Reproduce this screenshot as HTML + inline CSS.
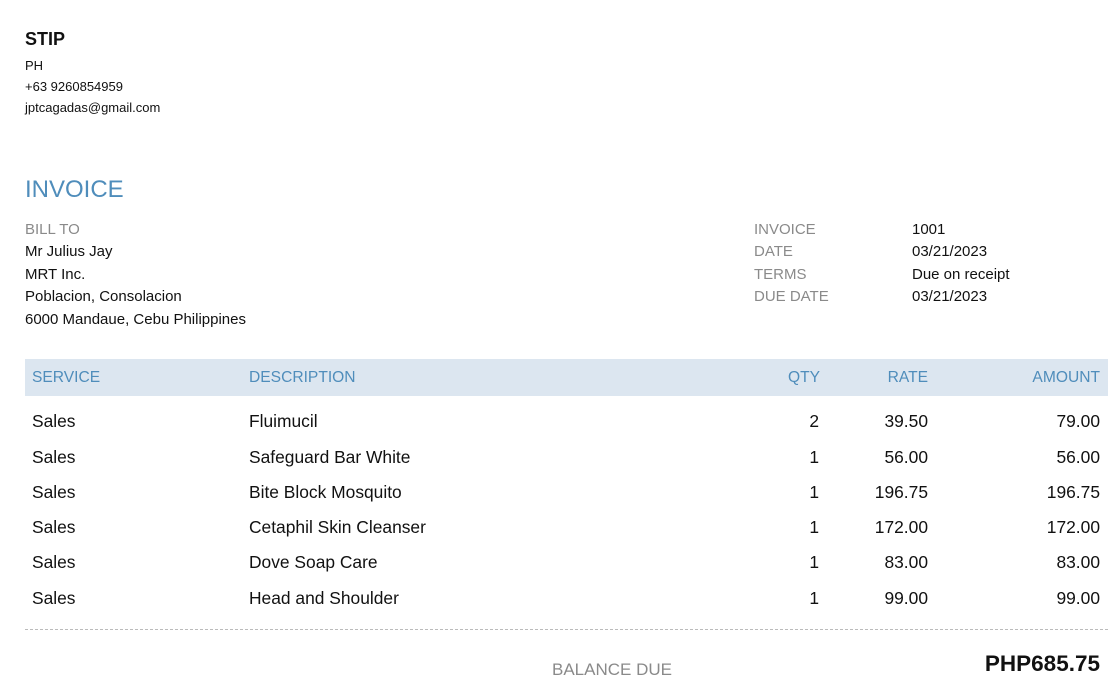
<!DOCTYPE html>
<html><head><meta charset="utf-8"><style>
body{margin:0;width:1120px;height:698px;background:#fff;font-family:"Liberation Sans",sans-serif;color:#111;position:relative;overflow:hidden}
div{position:absolute;white-space:nowrap}
.s{font-size:13px;line-height:14px}
.m{font-size:15px;line-height:20px}
.t{font-size:17.4px;line-height:20px}
.h{font-size:15.6px;line-height:20px}
.g{color:#8a8a8a}
.b{color:#4f8dbb}
.r{text-align:right}
</style></head><body>
<div style="left:25px;top:29px;font-size:18px;font-weight:bold;line-height:20px">STIP</div>
<div class="s" style="left:25px;top:59px">PH</div>
<div class="s" style="left:25px;top:80px">+63 9260854959</div>
<div class="s" style="left:25px;top:101px">jptcagadas@gmail.com</div>
<div class="b" style="left:25px;top:176px;font-size:24px;line-height:28px">INVOICE</div>

<div class="m g" style="left:25px;top:220px">BILL TO</div>
<div class="m" style="left:25px;top:242px">Mr Julius Jay</div>
<div class="m" style="left:25px;top:265px">MRT Inc.</div>
<div class="m" style="left:25px;top:287px">Poblacion, Consolacion</div>
<div class="m" style="left:25px;top:310px">6000 Mandaue, Cebu Philippines</div>

<div class="m g" style="left:754px;top:220px">INVOICE</div>
<div class="m g" style="left:754px;top:242px">DATE</div>
<div class="m g" style="left:754px;top:265px">TERMS</div>
<div class="m g" style="left:754px;top:287px">DUE DATE</div>
<div class="m" style="left:912px;top:220px">1001</div>
<div class="m" style="left:912px;top:242px">03/21/2023</div>
<div class="m" style="left:912px;top:265px">Due on receipt</div>
<div class="m" style="left:912px;top:287px">03/21/2023</div>

<div style="left:25px;top:359px;width:1083px;height:37px;background:#dce6f0"></div>
<div class="h b" style="left:32px;top:368px">SERVICE</div>
<div class="h b" style="left:249px;top:368px">DESCRIPTION</div>
<div class="h b r" style="right:300px;top:368px">QTY</div>
<div class="h b r" style="right:192px;top:368px">RATE</div>
<div class="h b r" style="right:20px;top:368px">AMOUNT</div>

<div class="t" style="left:32px;top:411px">Sales</div><div class="t" style="left:249px;top:411px">Fluimucil</div><div class="t r" style="right:301px;top:411px">2</div><div class="t r" style="right:192px;top:411px">39.50</div><div class="t r" style="right:20px;top:411px">79.00</div>
<div class="t" style="left:32px;top:447px">Sales</div><div class="t" style="left:249px;top:447px">Safeguard Bar White</div><div class="t r" style="right:301px;top:447px">1</div><div class="t r" style="right:192px;top:447px">56.00</div><div class="t r" style="right:20px;top:447px">56.00</div>
<div class="t" style="left:32px;top:482px">Sales</div><div class="t" style="left:249px;top:482px">Bite Block Mosquito</div><div class="t r" style="right:301px;top:482px">1</div><div class="t r" style="right:192px;top:482px">196.75</div><div class="t r" style="right:20px;top:482px">196.75</div>
<div class="t" style="left:32px;top:517px">Sales</div><div class="t" style="left:249px;top:517px">Cetaphil Skin Cleanser</div><div class="t r" style="right:301px;top:517px">1</div><div class="t r" style="right:192px;top:517px">172.00</div><div class="t r" style="right:20px;top:517px">172.00</div>
<div class="t" style="left:32px;top:552px">Sales</div><div class="t" style="left:249px;top:552px">Dove Soap Care</div><div class="t r" style="right:301px;top:552px">1</div><div class="t r" style="right:192px;top:552px">83.00</div><div class="t r" style="right:20px;top:552px">83.00</div>
<div class="t" style="left:32px;top:588px">Sales</div><div class="t" style="left:249px;top:588px">Head and Shoulder</div><div class="t r" style="right:301px;top:588px">1</div><div class="t r" style="right:192px;top:588px">99.00</div><div class="t r" style="right:20px;top:588px">99.00</div>

<div style="left:25px;top:629px;width:1083px;border-top:1px dashed #bbb"></div>
<div class="g" style="left:552px;top:660px;font-size:17px;line-height:20px">BALANCE DUE</div>
<div class="r" style="right:20px;top:652px;font-size:22.5px;font-weight:bold;line-height:24px">PHP685.75</div>
</body></html>
